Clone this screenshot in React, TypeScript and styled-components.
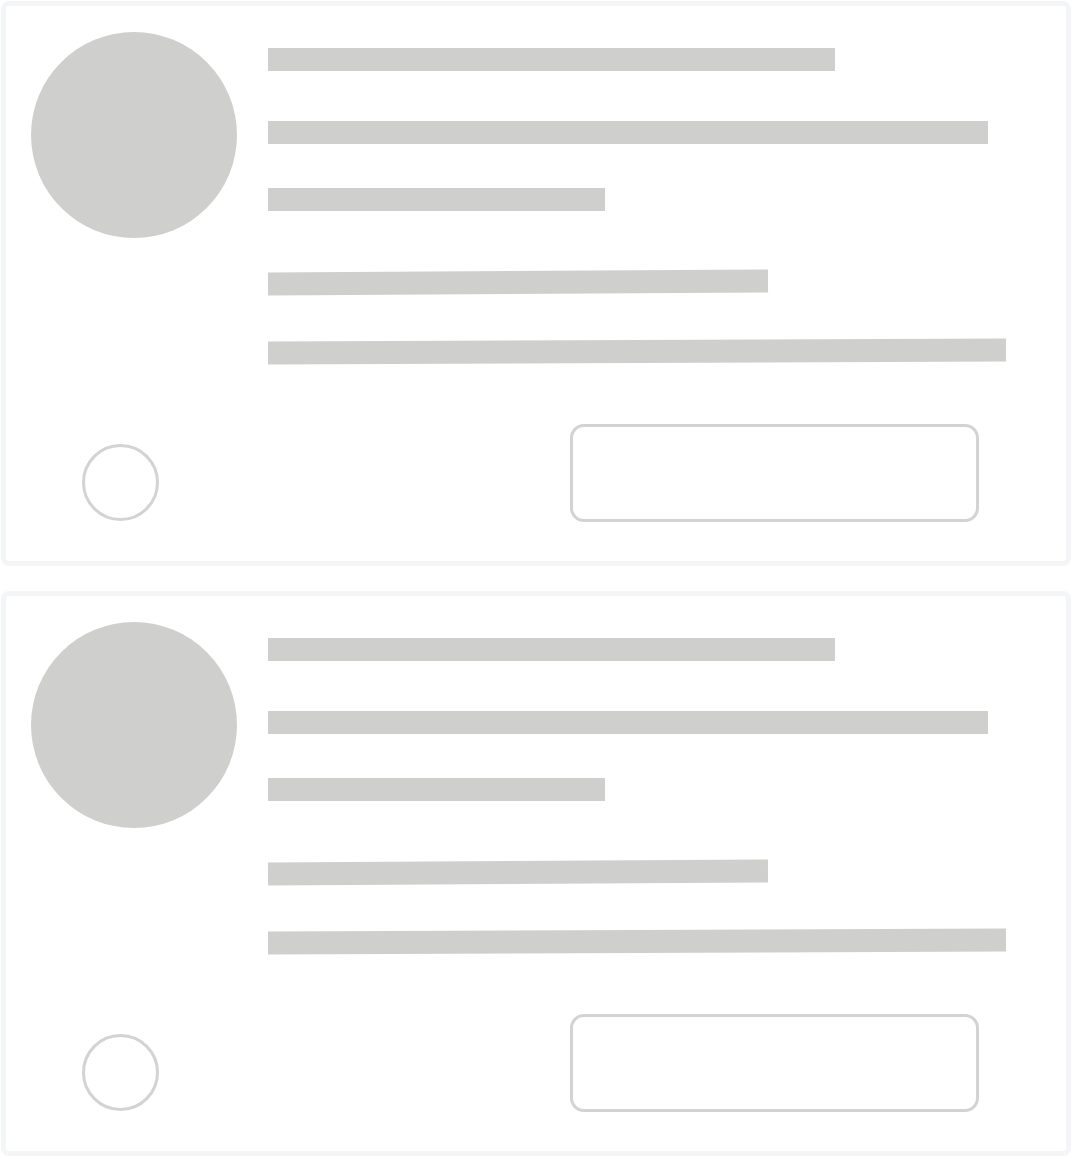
import React from "react";
import styled, { createGlobalStyle } from "styled-components";

const palette = {
  bone: "#cfcfcd",
  outline: "#d3d3d3",
  frame: "#f4f5f6",
  white: "#ffffff",
};

const GlobalStyle = createGlobalStyle`
  * { box-sizing: border-box; }
  body {
    margin: 0;
    background: ${palette.white};
    font-family: "Liberation Sans", Arial, sans-serif;
  }
`;

type LineSpec = { width: number; gap: number; tilt?: number };

const lines: LineSpec[] = [
  { width: 567, gap: 16 },
  { width: 720, gap: 50 },
  { width: 337, gap: 44 },
  { width: 500, gap: 60, tilt: -0.34 },
  { width: 738, gap: 46, tilt: -0.25 },
];

const SkeletonCard: React.FC = () => {
  return (
    <StyledCard>
      <StyledTop>
        <StyledAvatar />
        <StyledLines>
          {lines.map((l, i) => (
            <StyledLine key={i} $width={l.width} $gap={l.gap} $tilt={l.tilt ?? 0} />
          ))}
        </StyledLines>
      </StyledTop>
      <StyledFooter>
        <StyledDot />
        <StyledButtonGhost />
      </StyledFooter>
    </StyledCard>
  );
};

const App: React.FC = () => {
  return (
    <>
      <GlobalStyle />
      <StyledList>
        <SkeletonCard />
        <SkeletonCard />
      </StyledList>
    </>
  );
};

export default App;

const StyledList = styled.div`
  display: flex;
  flex-direction: column;
  gap: 25px;
  padding: 1px 1px 0 1px;
`;

const StyledCard = styled.div`
  height: 565px;
  border: 5px solid ${palette.frame};
  border-radius: 8px;
  background: ${palette.white};
  padding: 26px 0 0 25px;
  display: flex;
  flex-direction: column;
`;

const StyledTop = styled.div`
  display: flex;
  align-items: flex-start;
`;

const StyledAvatar = styled.div`
  width: 206px;
  height: 206px;
  border-radius: 50%;
  background: ${palette.bone};
  flex-shrink: 0;
`;

const StyledLines = styled.div`
  display: flex;
  flex-direction: column;
  margin-left: 31px;
`;

const StyledLine = styled.div<{ $width: number; $gap: number; $tilt: number }>`
  width: ${(p) => p.$width}px;
  height: 23px;
  margin-top: ${(p) => p.$gap}px;
  background: ${palette.bone};
  transform: rotate(${(p) => p.$tilt}deg);
`;

const StyledFooter = styled.div`
  display: flex;
  align-items: flex-start;
  margin-top: 61px;
`;

const StyledDot = styled.div`
  width: 77px;
  height: 77px;
  margin: 20px 0 0 51px;
  border: 3px solid ${palette.outline};
  border-radius: 50%;
  flex-shrink: 0;
`;

const StyledButtonGhost = styled.div`
  width: 409px;
  height: 98px;
  margin-left: 411px;
  border: 3px solid ${palette.outline};
  border-radius: 14px;
`;
